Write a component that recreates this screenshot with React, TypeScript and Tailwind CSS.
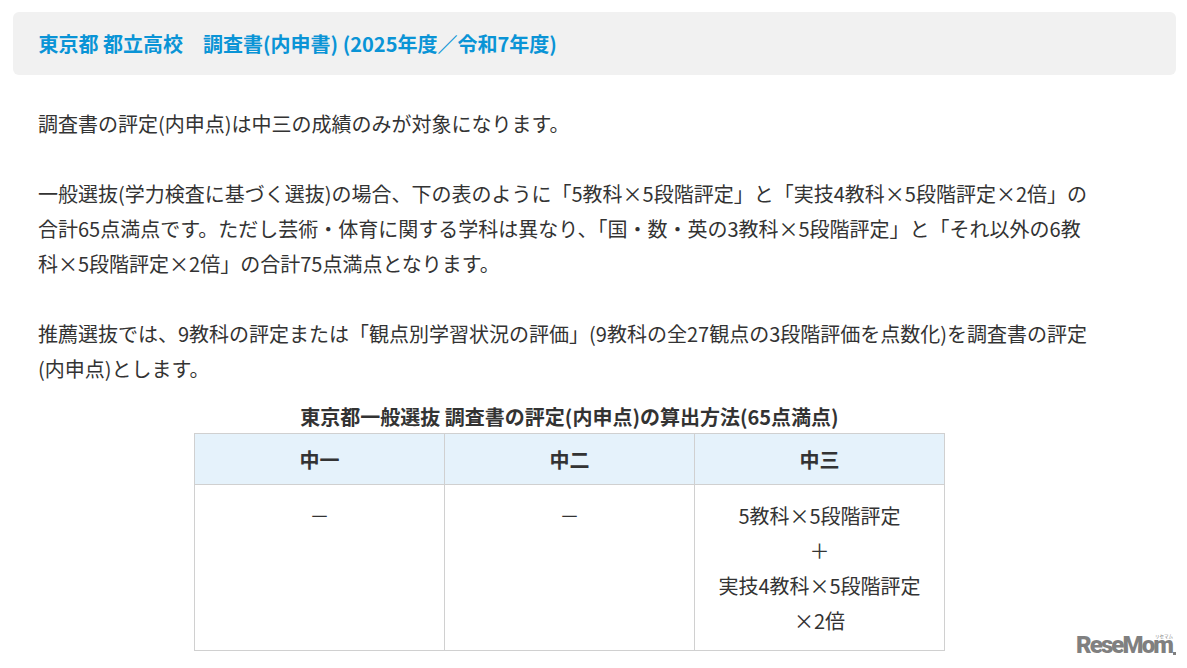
const font = "font-['Noto_Sans_CJK_JP','Noto_Sans',sans-serif]";

function Logo() {
  return (
    <div className="absolute left-[1076px] top-[631px] flex items-start text-[#808080]">
      <span className="font-['Roboto',sans-serif] text-[24px] leading-[28px] font-black tracking-[-1.9px]">ReseMom</span>
      <span className="w-[3px] h-[3px] ml-[1px] bg-[#808080] mt-[21px]" />
      <span className="absolute left-[79px] top-[3px] text-[4.5px] leading-[5px]">リセマム</span>
    </div>
  );
}

export default function App() {
  return (
    <div className={`${font} relative w-[1187px] h-[668px] overflow-hidden bg-white text-[#333] text-[20px] leading-[35px]`}>
      <div className="pt-3 pl-[13px] pr-[11px]">
        <div className="h-[63px] rounded-md bg-[#f1f1f1] pl-[25.5px] flex items-center text-[#0a94d6] font-bold">
          東京都 都立高校　調査書(内申書) (2025年度／令和7年度)
        </div>
      </div>

      <div className="pl-[38px] pr-[97px] pt-[31px]">
        <p>調査書の評定(内申点)は中三の成績のみが対象になります。</p>
        <p className="mt-[35px]">
          一般選抜(学力検査に基づく選抜)の場合、下の表のように「5教科×5段階評定」と「実技4教科×5段階評定×2倍」の合計65点満点です。ただし芸術・体育に関する学科は異なり、「国・数・英の3教科×5段階評定」と「それ以外の6教科×5段階評定×2倍」の合計75点満点となります。
        </p>
        <p className="mt-[35px]">
          推薦選抜では、9教科の評定または「観点別学習状況の評価」(9教科の全27観点の3段階評価を点数化)を調査書の評定(内申点)とします。
        </p>
      </div>

      <div className="flex flex-col items-center pr-[48px] pt-[14px]">
        <div className="font-bold h-[33px] leading-[33px]">東京都一般選抜 調査書の評定(内申点)の算出方法(65点満点)</div>
        <table className="w-[751px] table-fixed border-collapse text-center">
          <thead>
            <tr className="h-[51px] bg-[#e5f2fb] font-bold">
              <th className="border border-[#d0d0d0]">中一</th>
              <th className="border border-[#d0d0d0]">中二</th>
              <th className="border border-[#d0d0d0]">中三</th>
            </tr>
          </thead>
          <tbody>
            <tr>
              <td className="border border-[#d0d0d0] align-top pt-[13px] pb-[12px]">－</td>
              <td className="border border-[#d0d0d0] align-top pt-[13px] pb-[12px]">－</td>
              <td className="border border-[#d0d0d0] align-top pt-[13px] pb-[12px]">
                5教科×5段階評定
                <br />＋<br />
                実技4教科×5段階評定
                <br />×2倍
              </td>
            </tr>
          </tbody>
        </table>
      </div>

      <Logo />
    </div>
  );
}
